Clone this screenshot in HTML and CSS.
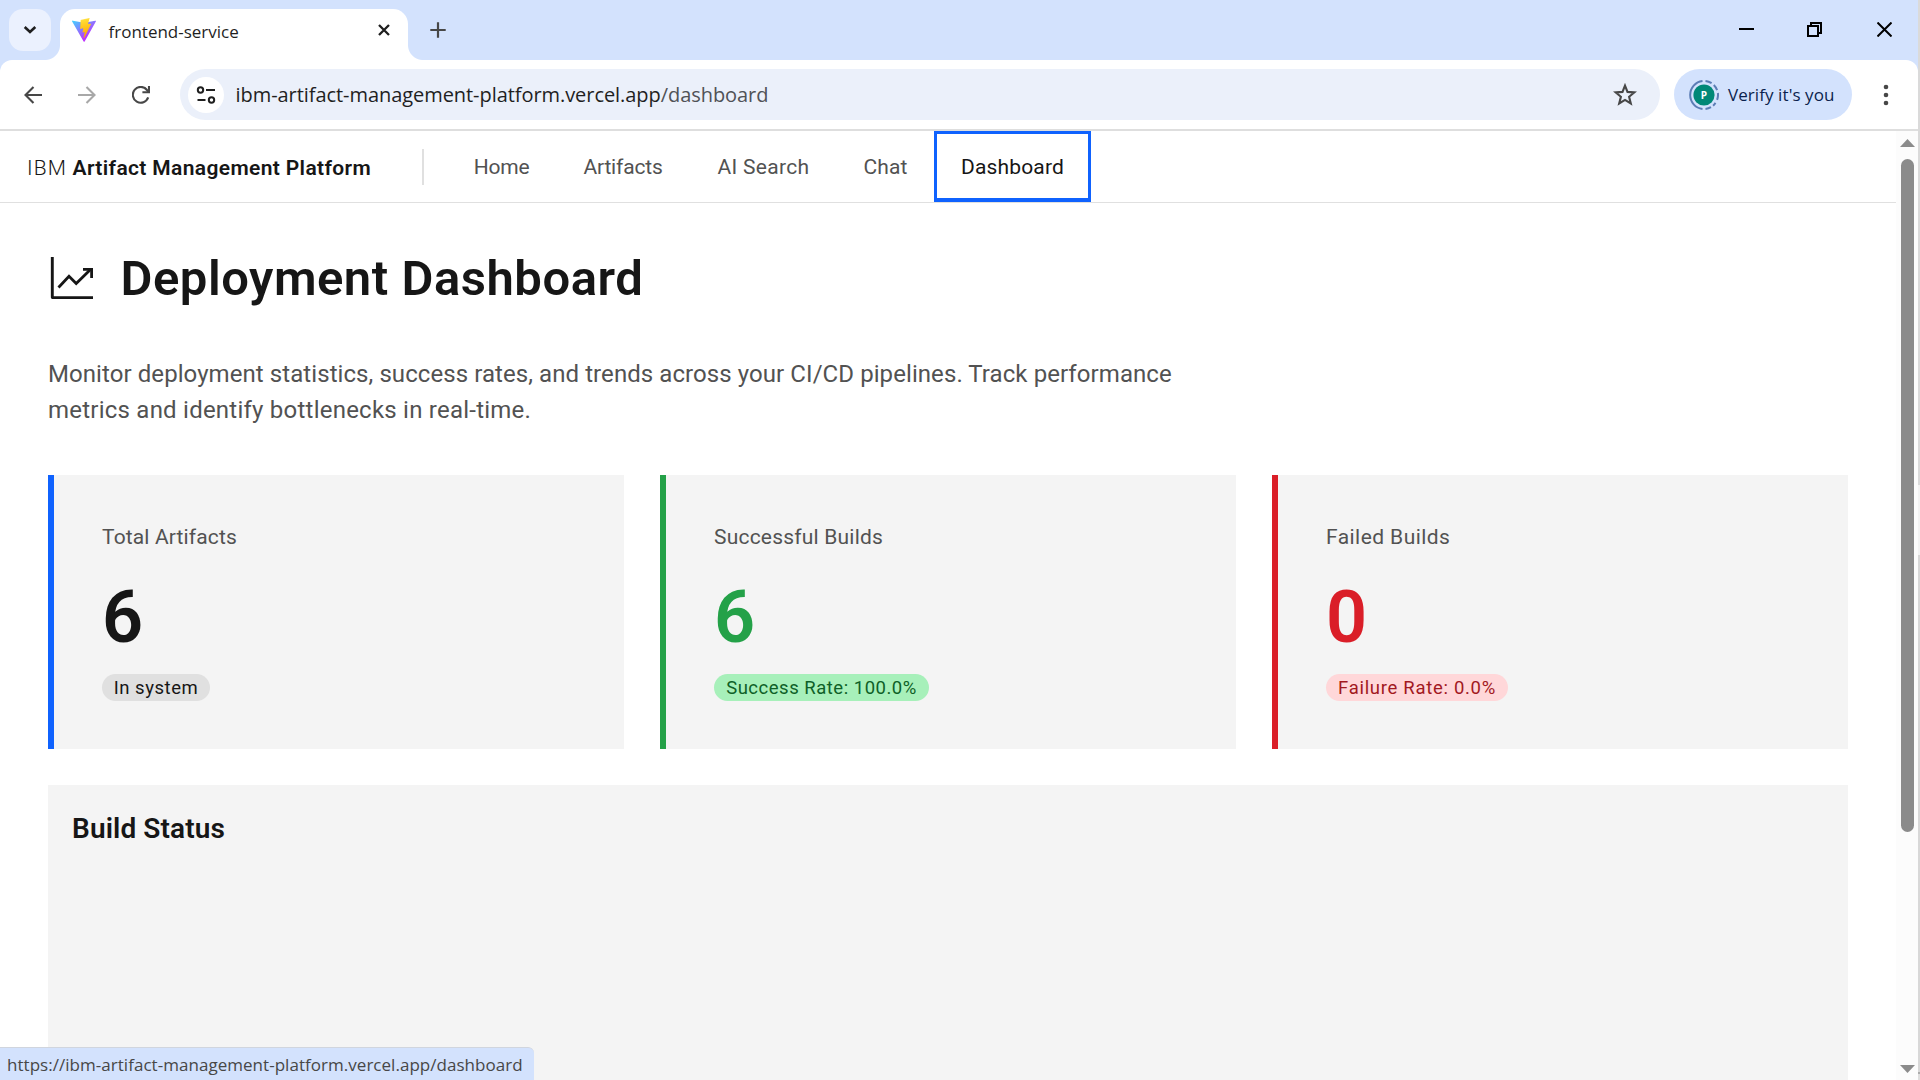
FILE: index.html
```html
<!DOCTYPE html>
<html lang="en">
<head>
<meta charset="utf-8">
<title>frontend-service</title>
<link rel="stylesheet" href="styles.css">
</head>
<body>
<div class="screen">
  <div class="window">
    <div class="tabstrip">
      <button class="tab-search" aria-label="Search tabs">
        <svg width="14" height="10" viewBox="0 0 14 10"><path d="M1.7 2l5.3 5 5.3-5" fill="none" stroke="#1f1f1f" stroke-width="2.6"/></svg>
      </button>
      <div class="tab">
        <svg class="favicon" width="24" height="24" viewBox="0 0 32 32">
          <defs>
            <linearGradient id="va" x1="0" y1="0.02" x2="0.6" y2="0.8"><stop offset="0" stop-color="#41d1ff"/><stop offset="1" stop-color="#bd34fe"/></linearGradient>
            <linearGradient id="vb" x1="0.43" y1="0.02" x2="0.55" y2="0.89"><stop offset="0" stop-color="#ffea83"/><stop offset="0.08" stop-color="#ffdd35"/><stop offset="1" stop-color="#ffa800"/></linearGradient>
          </defs>
          <path fill="url(#va)" d="M31.8 4.7L16.9 31.4a.8.8 0 0 1-1.4 0L.2 4.7a.8.8 0 0 1 .9-1.2l15 2.7h.3l14.7-2.7a.8.8 0 0 1 .7 1.2z"/>
          <path fill="url(#vb)" d="M23 0L11.900 2.200a.4.4 0 0 0-.33.38l-.68 11.500a.4.4 0 0 0 .5.42l3.100-.72a.4.4 0 0 1 .49.48l-.92 4.500a.4.4 0 0 0 .52.47l1.900-.58a.4.4 0 0 1 .52.47l-1.460 7.070c-.1.440.49.680.74.300l.16-.25L25.500 8.100a.4.4 0 0 0-.44-.58l-3.200.61a.4.4 0 0 1-.46-.52l2.080-7.200A.4.4 0 0 0 23 0z"/>
        </svg>
        <span class="tab-title">frontend-service</span>
        <svg class="tab-close" width="12" height="12" viewBox="0 0 12 12"><path d="M1 1l10 10M11 1L1 11" stroke="#1f1f1f" stroke-width="2.3"/></svg>
      </div>
      <svg class="new-tab" width="16" height="16" viewBox="0 0 16 16"><path d="M8 .3v15.400M.3 8h15.400" stroke="#474747" stroke-width="2.2"/></svg>
      <div class="controls">
        <svg width="15" height="15" viewBox="0 0 15 15"><path d="M0 7h15" stroke="#000" stroke-width="2"/></svg>
        <svg width="15" height="15" viewBox="0 0 15 15"><path d="M1 4h10v10H1zM4 4V1h10v10h-3" fill="none" stroke="#000" stroke-width="2"/></svg>
        <svg width="15" height="15" viewBox="0 0 15 15"><path d="M.5.5l14 14M14.500.5l-14 14" stroke="#000" stroke-width="2"/></svg>
      </div>
    </div>

    <div class="toolbar-wrap">
      <div class="toolbar">
        <div class="nav-icons">
          <svg width="18" height="18" viewBox="0 0 18 18"><path d="M18 9H1.800M9.500 1L1.500 9l8 8" fill="none" stroke="#474747" stroke-width="2.1"/></svg>
          <svg width="18" height="18" viewBox="0 0 18 18"><path d="M0 9h16.200M8.500 1l8 8-8 8" fill="none" stroke="#a8a8a8" stroke-width="2.1"/></svg>
          <svg width="18" height="18" viewBox="0 0 18 18"><path d="M16.200 11.400A7.900 7.900 0 1 1 15 4l1.600 1.900" fill="none" stroke="#474747" stroke-width="2.1"/><path d="M17 0v6.300h-6.600" fill="none" stroke="#474747" stroke-width="2.1"/></svg>
        </div>
        <div class="omnibox">
          <span class="site-info">
            <svg width="20" height="18" viewBox="0 0 20 18" fill="none" stroke="#1f1f1f" stroke-width="2"><circle cx="4.500" cy="4" r="2.700"/><path d="M10 4h9M1.500 14h8"/><circle cx="15.500" cy="14" r="2.700"/></svg>
          </span>
          <span class="url"><span class="host">ibm-artifact-management-platform.vercel.app</span><span class="path">/dashboard</span></span>
          <svg class="star" width="24" height="24" viewBox="0 0 24 24"><path d="M12 2.600l2.500 6.300 6.900.5-5.300 4.400 1.700 6.700L12 16.900l-5.800 3.600 1.700-6.700-5.300-4.400 6.900-.5z" fill="none" stroke="#474747" stroke-width="2.1"/></svg>
        </div>
        <div class="profile">
          <svg class="avatar" width="30" height="30" viewBox="0 0 30 30">
            <path d="M13.500 1.100A14 14 0 0 0 13.500 28.900" fill="none" stroke="#5c7db5" stroke-width="2"/>
            <path d="M16.500 1.100A14 14 0 0 1 22.600 3.200M24.800 5A14 14 0 0 1 28.100 10.200M28.900 13A14 14 0 0 1 28.100 19.800M26.500 22.900A14 14 0 0 1 24.100 25.700M22 27.100A14 14 0 0 1 16.500 28.900" fill="none" stroke="#5c7db5" stroke-width="2"/>
            <circle cx="15" cy="15" r="10.600" fill="#008877"/>
            <text x="15" y="18.500" text-anchor="middle" class="avatar-letter">P</text>
          </svg>
          <span class="profile-text">Verify it's you</span>
        </div>
        <svg class="kebab" width="6" height="22" viewBox="0 0 6 22" fill="#474747"><circle cx="3" cy="3" r="2.300"/><circle cx="3" cy="11" r="2.300"/><circle cx="3" cy="19" r="2.300"/></svg>
      </div>
    </div>

    <div class="viewport">
      <div class="page">
        <header class="app-header">
          <div class="brand"><span class="brand-prefix">IBM</span><span class="brand-name">Artifact Management Platform</span></div>
          <nav class="app-nav">
            <a class="nav-home">Home</a>
            <a class="nav-artifacts">Artifacts</a>
            <a class="nav-search">AI Search</a>
            <a class="nav-chat">Chat</a>
            <a class="nav-dashboard current">Dashboard</a>
          </nav>
        </header>
        <main class="dashboard">
          <div class="heading">
            <svg width="48" height="48" viewBox="0 0 48 48" fill="none" stroke="#161616">
              <path d="M4.300 3v40.600H45" stroke-width="2.900" stroke-linejoin="round"/>
              <path d="M10.500 33.500L21 22.300l7.200 7.200L43 15" stroke-width="2.800"/>
              <path d="M35 15.300h8.600v8.600" stroke-width="2.800"/>
            </svg>
            <h1>Deployment Dashboard</h1>
          </div>
          <p class="intro"><span class="intro-first">Monitor deployment statistics, success rates, and trends across your CI/CD pipelines. Track performance</span> <span class="intro-second">metrics and identify bottlenecks in real-time.</span></p>
          <section class="cards">
            <article class="card total">
              <div class="label">Total Artifacts</div><div class="value">6</div><div class="tag">In system</div>
            </article>
            <article class="card success">
              <div class="label">Successful Builds</div><div class="value">6</div><div class="tag">Success Rate: 100.0%</div>
            </article>
            <article class="card failed">
              <div class="label">Failed Builds</div><div class="value">0</div><div class="tag">Failure Rate: 0.0%</div>
            </article>
          </section>
          <section class="panel"><h2>Build Status</h2></section>
        </main>
      </div>
      <div class="scrollbar">
        <svg width="15" height="8" viewBox="0 0 15 8"><path d="M0 8L7.500 0 15 8z" fill="#8b8b8b"/></svg>
        <div class="thumb"></div>
        <svg class="down" width="15" height="8" viewBox="0 0 15 8"><path d="M0 0l7.500 8L15 0z" fill="#8b8b8b"/></svg>
      </div>
    </div>
    <div class="status">https://ibm-artifact-management-platform.vercel.app/dashboard</div>
  </div>
  <div class="edge"></div>
</div>
</body>
</html>
```
FILE: styles.css
```css
* { box-sizing: border-box; }
body { margin: 0; background: #fff; }
svg { display: block; flex: none; }

.screen { display: flex; width: 1920px; height: 1080px; overflow: hidden; }
.window { position: relative; width: 1918px; display: flex; flex-direction: column; font-family: "Open Sans", "Noto Sans", sans-serif; }
.edge {
  width: 2px;
  background: linear-gradient(#dadada 485px, #f3f3f3 485px 555px, #d8d8d8 555px 1072px, #ababab 1072px 1074px, #dedede 1074px);
}

/* Tab strip */
.tabstrip { display: flex; height: 60px; padding: 9px 26px 0 9px; background: #d3e2fd; }
.tab-search {
  display: flex; align-items: center; justify-content: center;
  width: 42px; height: 42px; padding: 0; border: 0; border-radius: 14px; background: #ebf1fe;
}
.tab {
  position: relative; display: flex; align-items: center;
  width: 348px; height: 51px; margin-left: 9px; padding: 0 18px 7px 12px;
  border-radius: 15px 15px 0 0; background: #fff;
}
.tab::before, .tab::after { content: ""; position: absolute; bottom: 0; width: 15px; height: 15px; }
.tab::before { left: -15px; background: radial-gradient(circle at 0 0, transparent 14.5px, #fff 15.5px); }
.tab::after { right: -15px; background: radial-gradient(circle at 100% 0, transparent 14.5px, #fff 15.5px); }
.favicon { margin-bottom: 2px; }
.tab-title { flex: 1; margin-left: 12.5px; padding-top: 2px; font-size: 17px; line-height: 24px; color: #1f1f1f; }
.tab-close { margin-bottom: 2px; }
.new-tab { margin: 13px 0 0 22px; }
.controls { display: flex; gap: 54px; margin: 13px 0 0 auto; }
.controls svg:nth-child(2) { margin-left: -1px; }
.controls svg:last-child { margin-left: 1px; }

/* Toolbar */
.toolbar-wrap { background: #d3e2fd; }
.toolbar {
  display: flex; align-items: center; height: 71px; padding: 0 29px 0 24px;
  border-bottom: 2px solid #dedede; border-radius: 12px 12px 0 0; background: #fff;
}
.nav-icons { display: flex; gap: 36px; width: 156px; }
.omnibox { display: flex; align-items: center; width: 1480px; height: 51px; padding: 0 23px 0 8px; border-radius: 26px; background: #ebf0fa; }
.site-info { display: flex; align-items: center; justify-content: center; width: 36px; height: 36px; border-radius: 50%; background: #fff; }
.url { flex: 1; margin-left: 11.5px; font-size: 20px; line-height: 30px; color: #1f1f1f; letter-spacing: -0.058px; }
.path { color: #505256; }
.profile {
  display: flex; align-items: center; width: 178px; height: 51px; margin-left: 14px; padding-left: 15px;
  border-radius: 26px; background: #d3e2fd; color: #0b1f4d; font-size: 17px; letter-spacing: 0.078px;
}
.avatar { margin-right: 9px; }
.avatar-letter { font: 700 10px "Open Sans", sans-serif; fill: #fff; }
.kebab { margin-left: auto; }

/* Page */
.viewport { display: flex; flex: 1; min-height: 0; }
.page { width: 1896px; overflow: hidden; font-family: Roboto, "Liberation Sans", sans-serif; color: #161616; }
.app-header { display: flex; align-items: center; height: 72px; border-bottom: 1px solid #e0e0e0; font-size: 21px; }
.brand { display: flex; align-items: center; width: 424px; height: 36px; padding: 2px 0 0 27px; border-right: 2px solid #e0e0e0; }
.brand-prefix { width: 45.5px; letter-spacing: 1.1px; font-weight: 300; }
.brand-name { font-weight: 600; letter-spacing: 0.363px; white-space: nowrap; }
.app-nav { display: flex; align-self: stretch; margin-left: 23px; color: #525252; }
.app-nav a { display: flex; align-items: center; justify-content: center; }
.nav-home { width: 109px; letter-spacing: -0.225px; }
.nav-artifacts { width: 134px; letter-spacing: -0.174px; }
.nav-search { width: 147px; letter-spacing: 0.305px; }
.nav-chat { width: 97px; letter-spacing: 0.114px; }
.nav-dashboard { width: 157px; letter-spacing: 0.16px; }
.app-nav .current { padding-top: 1px; border: 3px solid #0f62fe; border-bottom-width: 4px; color: #161616; }

.dashboard { width: 1848px; padding: 51px 0 0 48px; }
.heading { display: flex; align-items: center; gap: 24.5px; height: 48px; }
h1 { margin: 0; padding-top: 2px; font-size: 49px; font-weight: 600; line-height: 60px; letter-spacing: 0.52px; white-space: nowrap; }
.intro { margin: 54px 0 47px; width: 1200px; font-size: 24px; line-height: 36px; color: #525252; }
.intro-first, .intro-second { display: block; white-space: nowrap; }
.intro-first { letter-spacing: 0.075px; }
.intro-second { letter-spacing: 0.231px; }

.cards { display: grid; grid-template-columns: repeat(3, 576px); gap: 36px; }
.card { height: 274px; padding: 48px; border-left: 6px solid; background: #f4f4f4; }
.total { border-color: #0f62fe; }
.success { border-color: #24a148; }
.failed { border-color: #da1e28; }
.label { font-size: 21px; line-height: 28px; color: #525252; }
.value { margin: 27px 0 16px; font-size: 72px; font-weight: 650; line-height: 80px; }
.tag {
  display: flex; align-items: center; justify-content: center; height: 27px; border-radius: 14px;
  font-size: 18.5px; white-space: nowrap;
}
.total .label { letter-spacing: 0.144px; }
.success .label { letter-spacing: 0.203px; }
.failed .label { letter-spacing: 0.433px; }
.success .value { color: #24a148; }
.failed .value { color: #da1e28; }
.total .tag { width: 108px; letter-spacing: 0.55px; background: #e0e0e0; color: #161616; }
.success .tag { width: 215px; letter-spacing: 0.51px; background: #a7f0ba; color: #0e6027; }
.failed .tag { width: 182px; letter-spacing: 0.7px; background: #ffd7d9; color: #a2191f; }

.panel { height: 480px; margin-top: 36px; padding: 26px 24px; background: #f4f4f4; }
h2 { margin: 0; font-size: 28px; font-weight: 600; line-height: 36px; letter-spacing: 0.115px; }

/* Scrollbar */
.scrollbar { display: flex; flex-direction: column; width: 22px; padding: 8px 0 7px 4px; background: #fcfcfc; }
.thumb { width: 13px; height: 673px; margin: 12px 0 0 1px; border-radius: 7px; background: #8b8b8b; }
.down { margin-top: auto; }

/* Link preview bubble in the lower left corner */
.status {
  position: absolute; left: 0; bottom: 0; width: 534px; height: 33px; padding-left: 7px;
  border-top: 1px solid #d0d5de; border-radius: 0 6px 0 0; background: #d3e2fd;
  font-size: 17px; line-height: 34px; color: #474747; letter-spacing: 0.035px; white-space: nowrap;
}
```
